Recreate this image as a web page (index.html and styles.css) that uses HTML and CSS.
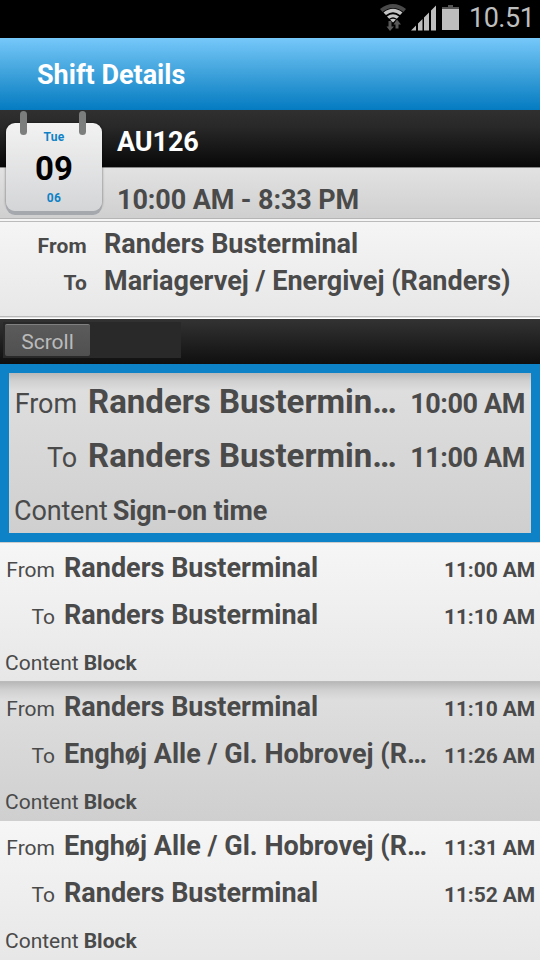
FILE: index.html
```html
<!DOCTYPE html>
<html lang="en">
<head>
    <meta charset="UTF-8">
    <meta name="viewport" content="width=device-width, initial-scale=1.0">
    <title>Shift Details</title>
    <link rel="stylesheet" href="styles.css">
</head>
<body>
    <div class="status-bar">
        <svg class="wifi" width="28" height="30" viewBox="0 0 28 30">
            <path d="M1 5Q14 -5 27 5L24.500 8Q14 0 3.500 8Z" fill="#4a4a4a"/>
            <path d="M4.500 8.500Q14 1 23.500 8.500L21 11Q14 5.500 7 11Z" fill="#c4c4c4"/>
            <path d="M8 12.500Q14 8 20 12.500L17.800 14.800Q14 11.500 10.200 14.800Z" fill="#c4c4c4"/>
            <path d="M11 15.500Q14 14 17 15.500L14 18.500Z" fill="#c4c4c4"/>
            <path d="M9.500 17h3v5.500h2.500L11 27L7.500 22.500H9.500Z" fill="#585858"/>
            <path d="M16.500 24.500h3v-4H22L18 15.500L14.500 20.500h2Z" fill="#585858"/>
        </svg>
        <svg class="signal" width="26" height="26" viewBox="0 0 26 26">
            <path d="M0 25.500L5 20.500V25.500ZM7 18.500L11.500 14V25.500H7ZM13 12.500L18 7.500V25.500H13ZM20 5.500L25 0.500V25.500H20Z" fill="#bebebe"/>
        </svg>
        <svg class="battery" width="17" height="25" viewBox="0 0 17 25">
            <rect x="6" y="0" width="5" height="2" fill="#555"/>
            <rect x="0" y="2" width="17" height="2" fill="#555"/>
            <rect x="0" y="4" width="17" height="21" fill="#bebebe"/>
        </svg>
        <span class="clock">10.51</span>
    </div>

    <h1 class="title-bar">Shift Details</h1>

    <div class="shift">
        <div class="shift-name">AU126</div>
        <div class="shift-time">10:00 AM - 8:33 PM</div>
        <div class="calendar">
            <span class="month">Tue</span>
            <span class="day">09</span>
            <span class="year">06</span>
        </div>
    </div>

    <div class="route">
        <div class="route-row"><span class="route-label">From</span><span class="route-stop">Randers Busterminal</span></div>
        <div class="route-row"><span class="route-label">To</span><span class="route-stop">Mariagervej / Energivej (Randers)</span></div>
    </div>

    <div class="toolbar">
        <div class="switch"><button class="scroll">Scroll</button></div>
    </div>

    <div class="duty selected">
        <div class="line"><span class="label">From</span><span class="stop">Randers Bustermin<span class="dots">…</span></span><span class="time">10:00 AM</span></div>
        <div class="line"><span class="label">To</span><span class="stop">Randers Bustermin<span class="dots">…</span></span><span class="time">11:00 AM</span></div>
        <div class="content"><span class="content-label">Content</span><b>Sign-on time</b></div>
    </div>
    <div class="duty after-selected">
        <div class="line"><span class="label">From</span><span class="stop">Randers Busterminal</span><span class="time">11:00 AM</span></div>
        <div class="line"><span class="label">To</span><span class="stop">Randers Busterminal</span><span class="time">11:10 AM</span></div>
        <div class="content"><span class="content-label">Content</span><b>Block</b></div>
    </div>
    <div class="duty dark">
        <div class="line"><span class="label">From</span><span class="stop">Randers Busterminal</span><span class="time">11:10 AM</span></div>
        <div class="line"><span class="label">To</span><span class="stop">Enghøj Alle / Gl. Hobrovej (R<span class="dots">…</span></span><span class="time">11:26 AM</span></div>
        <div class="content"><span class="content-label">Content</span><b>Block</b></div>
    </div>
    <div class="duty">
        <div class="line"><span class="label">From</span><span class="stop">Enghøj Alle / Gl. Hobrovej (R<span class="dots">…</span></span><span class="time">11:31 AM</span></div>
        <div class="line"><span class="label">To</span><span class="stop">Randers Busterminal</span><span class="time">11:52 AM</span></div>
        <div class="content"><span class="content-label">Content</span><b>Block</b></div>
    </div>
</body>
</html>
```
FILE: styles.css
```css
* {
    box-sizing: border-box;
}

body {
    margin: 0;
    width: 540px;
    height: 960px;
    overflow: hidden;
    background: #000;
    color: #4a4a4a;
    font-family: 'Roboto', sans-serif;
    white-space: nowrap;
}

.status-bar {
    display: flex;
    height: 38px;
    padding: 4px 6px 0 0;
    justify-content: flex-end;
    align-items: flex-start;
}

.signal {
    margin: 1px 0 0 4px;
}

.battery {
    margin: 1px 0 0 5px;
}

.clock {
    width: 65px;
    margin-left: 10px;
    font-size: 27px;
    line-height: 29px;
    letter-spacing: -0.5px;
    color: #bebebe;
}

.title-bar {
    margin: 0;
    height: 72px;
    padding-left: 37px;
    font-size: 27px;
    line-height: 75px;
    font-weight: bold;
    color: #fff;
    background: linear-gradient(#76c8fa, #49a9e0 40%, #047bc1);
}

.shift {
    position: relative;
    height: 111px;
}

.shift-name {
    height: 57px;
    padding-left: 117px;
    font-size: 27px;
    line-height: 65px;
    letter-spacing: -0.1px;
    font-weight: bold;
    color: #fff;
    background: linear-gradient(#303030, #282828 30%, #080808);
}

.shift-time {
    height: 54px;
    padding-left: 117px;
    font-size: 27px;
    line-height: 64px;
    letter-spacing: -0.1px;
    font-weight: bold;
    border-top: 1px solid #888;
    border-bottom: 2px solid #f5f5f5;
    background: linear-gradient(#e2e2e2, #cfcfcf);
    box-shadow: inset 0 -1px 0 #b5b5b5;
}

/* calendar hangs over both header rows */
.calendar {
    position: absolute;
    left: 6px;
    top: 13px;
    width: 96px;
    height: 88px;
    display: flex;
    flex-direction: column;
    align-items: center;
    border-radius: 9px;
    background: linear-gradient(#f2f2f2, #d4d5d7);
    box-shadow: 0 4px 0 #a5a8ac, 0 0 2px 1px rgba(0, 0, 0, 0.25);
    font-weight: bold;
}

.calendar::before,
.calendar::after {
    content: "";
    position: absolute;
    top: -12px;
    width: 7px;
    height: 24px;
    border-radius: 4px;
    background: #7c7e7e;
}

.calendar::before {
    left: 14px;
}

.calendar::after {
    left: 73px;
}

.month,
.year {
    font-size: 12px;
    line-height: 16px;
    letter-spacing: 0.3px;
    color: #0f82c6;
}

.month {
    margin-top: 6px;
}

.day {
    font-size: 33px;
    line-height: 47px;
    color: #000;
}

.year {
    margin-top: -2px;
}

.route {
    height: 98px;
    padding-top: 4px;
    border-top: 1px solid #bbb;
    border-bottom: 1px solid #fff;
    background: linear-gradient(#f5f5f5, #e7e7e7);
    box-shadow: inset 0 -1px 0 #e4e4e4, inset 0 -2px 0 #b8b8b8;
}

.route-row {
    display: flex;
    align-items: baseline;
    height: 37px;
    line-height: 37px;
    font-weight: bold;
}

.route-label {
    width: 87px;
    text-align: right;
    font-size: 21px;
    letter-spacing: 0.2px;
}

.route-stop {
    margin-left: 17px;
    font-size: 27px;
}

.toolbar {
    height: 45px;
    padding: 3px;
    background: linear-gradient(#333, #0f0f0f);
}

.switch {
    width: 178px;
    height: 36px;
    padding: 2px 2px;
    background: #292929;
}

.scroll {
    display: block;
    width: 85px;
    height: 32px;
    padding: 3px 0 0;
    border: 0;
    border-top: 1px solid #808080;
    border-radius: 2px;
    background: linear-gradient(#5b5b5b, #505050);
    color: #bbb;
    font-family: inherit;
    font-size: 21px;
}

.duty {
    height: 139px;
    padding: 2px 5px 0;
    background: linear-gradient(#f6f6f6, #e7e7e7);
}

.line {
    display: flex;
    align-items: baseline;
    height: 47px;
    line-height: 47px;
}

.label {
    width: 50px;
    text-align: right;
    font-size: 21px;
}

.stop {
    margin-left: 9px;
    font-size: 27px;
    font-weight: bold;
}

.dots {
    letter-spacing: -1px;
}

.time {
    margin-left: auto;
    font-size: 21px;
    font-weight: bold;
    letter-spacing: -0.1px;
}

.content {
    padding-top: 3px;
    font-size: 21px;
    line-height: 43px;
}

.content-label {
    margin-right: 5px;
}

.dark {
    padding-top: 2px;
    background: linear-gradient(#b8b8b8, #d0d0d0 8px, #dedede 18px, #cfcfcf);
}

.selected {
    height: 178px;
    border: 9px solid #0d82c6;
    padding: 2px 6px 0 5px;
    background: linear-gradient(#b8b8b8, #d0d0d0 8px, #dedede 18px, #cfcfcf);
}

.selected .line {
    height: 54px;
    line-height: 54px;
}

.selected .label {
    width: 63px;
    font-size: 27px;
    letter-spacing: -0.1px;
}

.selected .stop {
    margin-left: 11px;
    font-size: 33px;
}

.selected .time {
    font-size: 27px;
    letter-spacing: -0.4px;
}

.selected .content {
    padding-top: 0;
    font-size: 27px;
    line-height: 57px;
    letter-spacing: -0.15px;
}

.after-selected {
    height: 140px;
    border-top: 1px solid #ccc;
    border-bottom: 1px solid #bbb;
    padding-top: 2px;
}
```
